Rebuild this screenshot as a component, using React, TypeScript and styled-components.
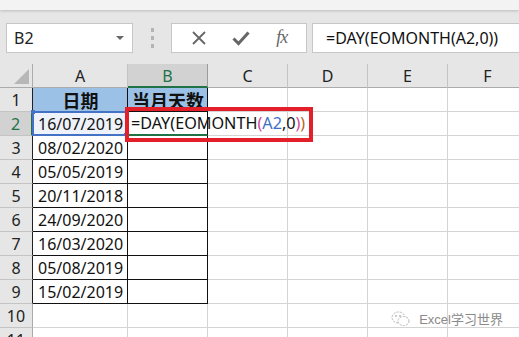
import React from "react";
import styled, { createGlobalStyle } from "styled-components";

const GlobalStyle = createGlobalStyle`
  html, body {
    margin: 0;
    padding: 0;
    background: #ffffff;
  }
  body {
    font-family: "Noto Sans", "Liberation Sans", sans-serif;
  }
`;

const green = "#217346";
const grid = "#d4d4d4";
const headerBg = "#e6e6e6";

const Window = styled.div`
  position: relative;
  width: 519px;
  height: 337px;
  overflow: hidden;
  background: #ffffff;
  display: flex;
  flex-direction: column;
`;

const TopStrip = styled.div`
  flex-shrink: 0;
  height: 10px;
  background: #f3f3f3;
  box-shadow: 0 1px 3px rgba(0, 0, 0, 0.18);
  position: relative;
  z-index: 1;
`;

const FormulaRow = styled.div`
  flex-shrink: 0;
  height: 54px;
  background: ${headerBg};
  display: flex;
  align-items: center;
  padding-left: 6px;
  padding-top: 1px;
  box-sizing: border-box;
`;

const NameBox = styled.div`
  width: 127px;
  height: 30px;
  box-sizing: border-box;
  background: #fff;
  border: 1px solid #c6c6c6;
  display: flex;
  align-items: center;
  justify-content: space-between;
  padding: 0 8px 0 7px;
  font-size: 16px;
  color: #222;
`;

const Caret = styled.span`
  width: 0;
  height: 0;
  border-left: 4px solid transparent;
  border-right: 4px solid transparent;
  border-top: 4px solid #666;
`;

const Grip = styled.div`
  width: 38px;
  height: 20px;
  display: flex;
  flex-direction: column;
  align-items: center;
  justify-content: space-between;

  span {
    width: 3px;
    height: 4px;
    background: #b4b4b4;
  }
`;

const ButtonBox = styled.div`
  width: 136px;
  height: 30px;
  box-sizing: border-box;
  background: #fff;
  border: 1px solid #c6c6c6;
  display: flex;
  align-items: center;
  justify-content: space-around;
  padding: 0 6px;
`;

const Fx = styled.span`
  font-family: "Liberation Serif", "DejaVu Serif", serif;
  font-style: italic;
  font-size: 18px;
  color: #666;
  letter-spacing: -1px;
`;

const FormulaInput = styled.div`
  flex: 1;
  height: 30px;
  margin-left: 5px;
  box-sizing: border-box;
  background: #fff;
  border: 1px solid #c6c6c6;
  border-right: none;
  display: flex;
  align-items: center;
  padding-left: 13px;
  font-size: 16px;
  color: #111;
`;

const Sheet = styled.div`
  flex-shrink: 0;
  display: grid;
  grid-template-columns: 33px 95px 80px 80px 80px 80px 80px;
  grid-auto-rows: 24px;
  position: relative;
`;

const Corner = styled.div`
  background: ${headerBg};
  border-right: 1px solid #ababab;
  border-bottom: 1px solid #ababab;
  position: relative;

  &::after {
    content: "";
    position: absolute;
    right: 3px;
    bottom: 3px;
    width: 0;
    height: 0;
    border-left: 15px solid transparent;
    border-bottom: 15px solid #b7b7b7;
  }
`;

const ColHead = styled.div<{ $active?: boolean }>`
  background: ${(p) => (p.$active ? "#d2d2d2" : headerBg)};
  color: ${(p) => (p.$active ? green : "#222")};
  border-right: 1px solid ${(p) => (p.$active ? "#9b9b9b" : "#c4c4c4")};
  border-bottom: ${(p) => (p.$active ? `2px solid ${green}` : "1px solid #ababab")};
  display: flex;
  align-items: center;
  justify-content: center;
  font-size: 16px;
  box-sizing: border-box;
  padding-top: 1px;
`;

const RowHead = styled.div<{ $active?: boolean; $edge?: boolean }>`
  background: ${(p) => (p.$active ? "#d2d2d2" : headerBg)};
  color: ${(p) => (p.$active ? green : "#222")};
  border-right: ${(p) =>
    p.$active ? `2px solid ${green}` : `1px solid ${p.$edge ? "#222" : "#ababab"}`};
  border-bottom: 1px solid #c4c4c4;
  display: flex;
  align-items: center;
  justify-content: center;
  font-size: 16px;
  box-sizing: border-box;
`;

const Cell = styled.div<{ $boxed?: boolean; $fill?: string; $bold?: boolean; $align?: string }>`
  position: relative;
  background: ${(p) => p.$fill || "#fff"};
  border-right: 1px solid ${(p) => (p.$boxed ? "#111" : grid)};
  border-bottom: 1px solid ${(p) => (p.$boxed ? "#111" : grid)};
  box-sizing: border-box;
  display: flex;
  align-items: center;
  justify-content: ${(p) => p.$align || "flex-start"};
  padding: 0 4px 0 5px;
  font-size: ${(p) => (p.$bold ? "18px" : "16px")};
  font-weight: ${(p) => (p.$bold ? 700 : 400)};
  font-family: ${(p) =>
    p.$bold ? '"Noto Sans CJK SC", "Noto Sans", sans-serif' : '"Noto Sans", sans-serif'};
  color: #111;
  white-space: nowrap;
  line-height: 1;
`;

const RefBox = styled.div`
  position: absolute;
  inset: -1px 0 -1px -1px;
  border: 2px solid #4472c4;
  pointer-events: none;

  &::before,
  &::after {
    content: "";
    position: absolute;
    width: 4px;
    height: 4px;
    background: #4472c4;
  }
  &::before {
    left: -3px;
    top: -3px;
  }
  &::after {
    right: -3px;
    bottom: -3px;
  }
`;

const ActiveCell = styled(Cell)`
  z-index: 2;
  background: #fff;
  padding-left: 3px;
  font-size: 16.2px;
  overflow: visible;
  border-bottom: 2px solid ${green};
`;

const Tok = styled.span<{ $c?: string }>`
  color: ${(p) => p.$c || "#111"};
`;

const TextCursor = styled.span`
  display: inline-block;
  width: 1px;
  height: 19px;
  background: #000;
  margin-left: 2px;
`;

const Annotation = styled.div`
  position: absolute;
  left: 125px;
  top: 43px;
  width: 188px;
  height: 35px;
  box-sizing: border-box;
  border: 4px solid #e3202a;
  z-index: 3;
`;

const Watermark = styled.div`
  position: absolute;
  right: 16px;
  bottom: 9px;
  display: flex;
  align-items: center;
  gap: 8px;
  font-size: 13px;
  color: #8a8a8a;
  font-family: "Liberation Sans", "Noto Sans CJK SC", sans-serif;
  z-index: 3;
`;

const WeChatIcon = () => (
  <svg width="20" height="16" viewBox="0 0 20 16">
    <ellipse cx="7.5" cy="6.5" rx="6.5" ry="5.5" fill="none" stroke="#b5b5b5" strokeWidth="1" strokeDasharray="2 1.2" />
    <ellipse cx="12.5" cy="10" rx="5.5" ry="4.5" fill="#fff" stroke="#b5b5b5" strokeWidth="1" strokeDasharray="2 1.2" />
    <circle cx="5" cy="5" r="0.9" fill="#b5b5b5" />
    <circle cx="9" cy="5" r="0.9" fill="#b5b5b5" />
  </svg>
);

const columns = ["A", "B", "C", "D", "E", "F"];
const dates = [
  "16/07/2019",
  "08/02/2020",
  "05/05/2019",
  "20/11/2018",
  "24/09/2020",
  "16/03/2020",
  "05/08/2019",
  "15/02/2019",
];

const Formula = () => (
  <>
    <Tok>=DAY(EOMONTH</Tok>
    <Tok $c="#d0499a">(</Tok>
    <Tok $c="#3e6fc9">A2</Tok>
    <Tok>,0</Tok>
    <Tok $c="#d0499a">)</Tok>
    <Tok $c="#b5651d">)</Tok>
    <TextCursor />
  </>
);

export default function App() {
  const rows: React.ReactNode[] = [];

  // row 1: table header
  rows.push(
    <React.Fragment key="r1">
      <RowHead $edge>1</RowHead>
      <Cell $boxed $fill="#9bc2e6" $bold $align="center">日期</Cell>
      <Cell $boxed $fill="#9bc2e6" $bold $align="center">当月天数</Cell>
      <Cell />
      <Cell />
      <Cell />
      <Cell />
    </React.Fragment>
  );

  dates.forEach((d, i) => {
    const n = i + 2;
    rows.push(
      <React.Fragment key={n}>
        <RowHead $active={n === 2} $edge>{n}</RowHead>
        <Cell $boxed $fill={n === 2 ? "#eef3fb" : undefined}>
          {d}
          {n === 2 && <RefBox />}
        </Cell>
        {n === 2 ? (
          <ActiveCell $boxed>
            <Formula />
          </ActiveCell>
        ) : (
          <Cell $boxed />
        )}
        <Cell />
        <Cell />
        <Cell />
        <Cell />
      </React.Fragment>
    );
  });

  [10, 11].forEach((n) => {
    rows.push(
      <React.Fragment key={n}>
        <RowHead>{n}</RowHead>
        {columns.map((c) => (
          <Cell key={c} />
        ))}
      </React.Fragment>
    );
  });

  return (
    <>
      <GlobalStyle />
      <Window>
        <TopStrip />
        <FormulaRow>
          <NameBox>
            B2
            <Caret />
          </NameBox>
          <Grip>
            <span />
            <span />
            <span />
          </Grip>
          <ButtonBox>
            <svg width="16" height="16" viewBox="0 0 16 16">
              <path d="M2 2 L14 14 M14 2 L2 14" stroke="#666" strokeWidth="1.8" />
            </svg>
            <svg width="18" height="16" viewBox="0 0 18 16">
              <path d="M1.5 8.5 L6.5 13.5 L16.5 2.5" fill="none" stroke="#666" strokeWidth="3" />
            </svg>
            <Fx>fx</Fx>
          </ButtonBox>
          <FormulaInput>=DAY(EOMONTH(A2,0))</FormulaInput>
        </FormulaRow>
        <Sheet>
          <Corner />
          {columns.map((c) => (
            <ColHead key={c} $active={c === "B"}>
              {c}
            </ColHead>
          ))}
          {rows}
          <Annotation />
        </Sheet>
        <Watermark>
          <WeChatIcon />
          Excel学习世界
        </Watermark>
      </Window>
    </>
  );
}
